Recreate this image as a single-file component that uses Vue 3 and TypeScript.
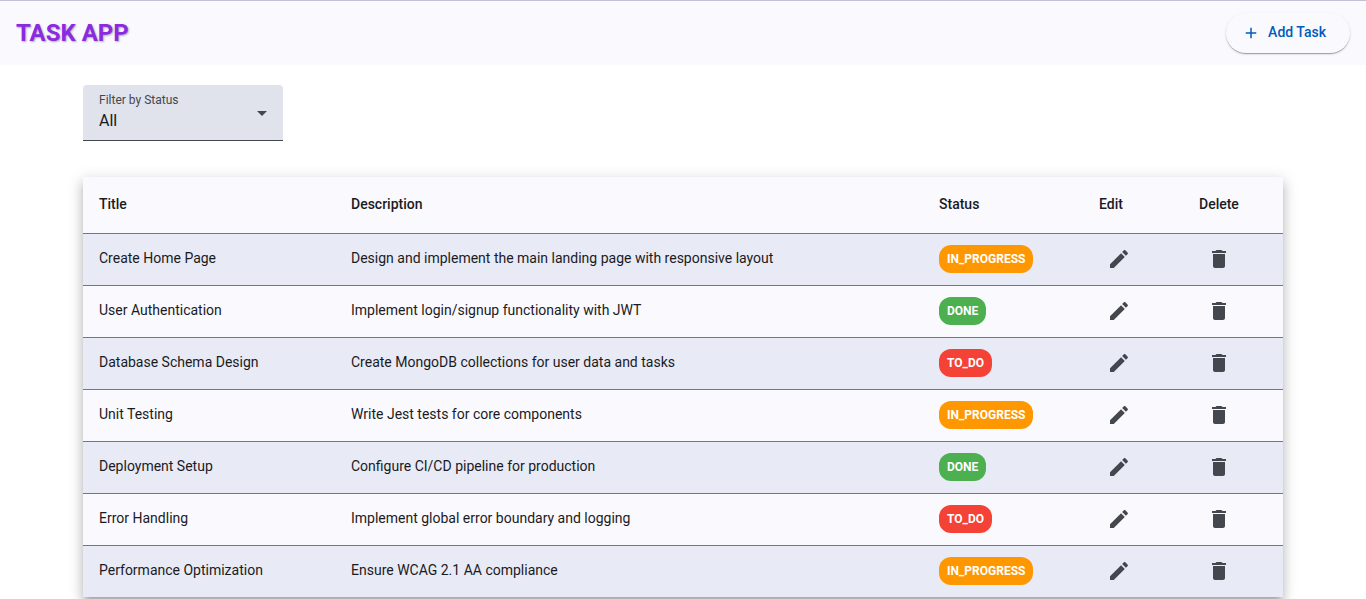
<script setup lang="ts">
import { ref, computed } from 'vue'

type Status = 'IN_PROGRESS' | 'DONE' | 'TO_DO'

interface Task {
  title: string
  description: string
  status: Status
}

const tasks = ref<Task[]>([
  { title: 'Create Home Page', description: 'Design and implement the main landing page with responsive layout', status: 'IN_PROGRESS' },
  { title: 'User Authentication', description: 'Implement login/signup functionality with JWT', status: 'DONE' },
  { title: 'Database Schema Design', description: 'Create MongoDB collections for user data and tasks', status: 'TO_DO' },
  { title: 'Unit Testing', description: 'Write Jest tests for core components', status: 'IN_PROGRESS' },
  { title: 'Deployment Setup', description: 'Configure CI/CD pipeline for production', status: 'DONE' },
  { title: 'Error Handling', description: 'Implement global error boundary and logging', status: 'TO_DO' },
  { title: 'Performance Optimization', description: 'Ensure WCAG 2.1 AA compliance', status: 'IN_PROGRESS' },
])

const filter = ref<'All' | Status>('All')
const visibleTasks = computed(() =>
  filter.value === 'All' ? tasks.value : tasks.value.filter((t) => t.status === filter.value),
)

function removeTask(task: Task) {
  tasks.value = tasks.value.filter((t) => t !== task)
}
</script>

<template>
  <header class="toolbar">
    <h1 class="brand">TASK APP</h1>
    <button class="add" type="button">
      <svg class="add-icon" viewBox="0 0 24 24" aria-hidden="true"><path d="M19 13h-6v6h-2v-6H5v-2h6V5h2v6h6v2z" /></svg>
      <span class="add-text">Add Task</span>
    </button>
  </header>

  <main class="content">
    <div class="field">
      <label class="field-label" for="status-filter">Filter by Status</label>
      <select id="status-filter" v-model="filter" class="field-select">
        <option value="All">All</option>
        <option value="TO_DO">TO_DO</option>
        <option value="IN_PROGRESS">IN_PROGRESS</option>
        <option value="DONE">DONE</option>
      </select>
      <svg class="field-arrow" viewBox="0 0 10 5" aria-hidden="true"><path d="M0 0h10L5 5z" /></svg>
    </div>

    <table class="tasks">
      <colgroup>
        <col class="col-title" />
        <col />
        <col class="col-status" />
        <col class="col-action" />
        <col class="col-action" />
      </colgroup>
      <thead>
        <tr>
          <th scope="col">Title</th>
          <th scope="col">Description</th>
          <th scope="col">Status</th>
          <th scope="col">Edit</th>
          <th scope="col">Delete</th>
        </tr>
      </thead>
      <tbody>
        <tr v-for="task in visibleTasks" :key="task.title">
          <td>{{ task.title }}</td>
          <td>{{ task.description }}</td>
          <td><span class="chip" :class="task.status.toLowerCase()">{{ task.status }}</span></td>
          <td>
            <button class="icon-button" type="button" :aria-label="`Edit ${task.title}`">
              <svg viewBox="0 0 24 24" aria-hidden="true"><path d="M3 17.25V21h3.75L17.81 9.94l-3.75-3.75L3 17.25zM20.71 7.04c.39-.39.39-1.02 0-1.41l-2.34-2.34c-.39-.39-1.02-.39-1.41 0l-1.83 1.83 3.75 3.75 1.83-1.83z" /></svg>
            </button>
          </td>
          <td>
            <button class="icon-button" type="button" :aria-label="`Delete ${task.title}`" @click="removeTask(task)">
              <svg viewBox="0 0 24 24" aria-hidden="true"><path d="M6 19c0 1.1.9 2 2 2h8c1.1 0 2-.9 2-2V7H6v12zM19 4h-3.5l-1-1h-5l-1 1H5v2h14V4z" /></svg>
            </button>
          </td>
        </tr>
      </tbody>
    </table>
  </main>
</template>

<style>
html {
  overflow: hidden;
}

body {
  background: #fff;
  font-family: Roboto, "Liberation Sans", sans-serif;
  color: #1a1b1f;
}
</style>

<style scoped>
.toolbar {
  display: flex;
  align-items: center;
  justify-content: space-between;
  height: 64px;
  padding: 0 16px;
  border-top: 1px solid #c4c0d6;
  background: #faf9fe;
}

.brand {
  margin: 0;
  font-size: 24px;
  line-height: 32px;
  font-weight: 700;
  color: #8a2be2;
  text-shadow: 1px 1px 2px rgba(0, 0, 0, 0.3);
}

.add {
  display: flex;
  align-items: center;
  gap: 8px;
  height: 40px;
  padding: 0 24px 0 16px;
  border: 0;
  border-radius: 20px;
  background: #faf9fe;
  box-shadow: 0 2px 1px -1px rgba(0, 0, 0, 0.2), 0 1px 1px rgba(0, 0, 0, 0.14), 0 1px 3px rgba(0, 0, 0, 0.12);
  color: #005cbb;
  font: 500 14px/20px Roboto, "Liberation Sans", sans-serif;
  cursor: pointer;
}

.add-text {
  padding-bottom: 2px;
}

.add-icon {
  width: 18px;
  height: 18px;
  fill: currentColor;
}

.content {
  max-width: 1200px;
  margin: 0 auto;
  padding: 20px 0;
}

.field {
  position: relative;
  width: 200px;
  margin-bottom: 36px;
}

.field-label {
  position: absolute;
  top: 7px;
  left: 16px;
  font-size: 12px;
  line-height: 16px;
  color: #44474e;
  pointer-events: none;
}

.field-select {
  display: block;
  width: 100%;
  height: 56px;
  padding: 24px 40px 8px 16px;
  border: 0;
  border-bottom: 1px solid #44474e;
  border-radius: 4px 4px 0 0;
  background: #e0e2ec;
  color: #1a1b1f;
  font: 400 16px/24px Roboto, "Liberation Sans", sans-serif;
  appearance: none;
}

.field-arrow {
  position: absolute;
  top: 26px;
  right: 16px;
  width: 10px;
  height: 5px;
  fill: #44474e;
  pointer-events: none;
}

.tasks {
  width: 100%;
  table-layout: fixed;
  border-spacing: 0;
  background: #faf9fe;
  box-shadow: 0 5px 5px -3px rgba(0, 0, 0, 0.2), 0 8px 10px 1px rgba(0, 0, 0, 0.14), 0 3px 14px 2px rgba(0, 0, 0, 0.12);
  font-size: 14px;
  line-height: 20px;
}

.col-title {
  width: 21%;
}

.col-status {
  width: 160px;
}

.col-action {
  width: 100px;
}

th,
td {
  box-sizing: border-box;
  padding: 0 16px;
  border-bottom: 1px solid #74777f;
  text-align: left;
}

th {
  height: 57px;
  padding-bottom: 2px;
  font-weight: 500;
}

td {
  height: 52px;
  padding-bottom: 4px;
}

tbody tr:nth-child(odd) {
  background: #e8eaf6;
}

tbody tr:last-child td {
  height: 51px;
  border-bottom: 0;
}

.chip {
  display: block;
  width: fit-content;
  margin-top: 2px;
  padding: 4px 8px;
  border-radius: 12px;
  color: #fff;
  font-size: 12px;
  font-weight: 700;
}

.in_progress {
  background: #ff9800;
}

.done {
  background: #4caf50;
}

.to_do {
  background: #f44336;
}

.icon-button {
  display: flex;
  align-items: center;
  justify-content: center;
  width: 40px;
  height: 40px;
  margin-top: 2px;
  padding: 0;
  border: 0;
  border-radius: 50%;
  background: transparent;
  color: #44474e;
  cursor: pointer;
}

.icon-button svg {
  width: 24px;
  height: 24px;
  fill: currentColor;
}
</style>
